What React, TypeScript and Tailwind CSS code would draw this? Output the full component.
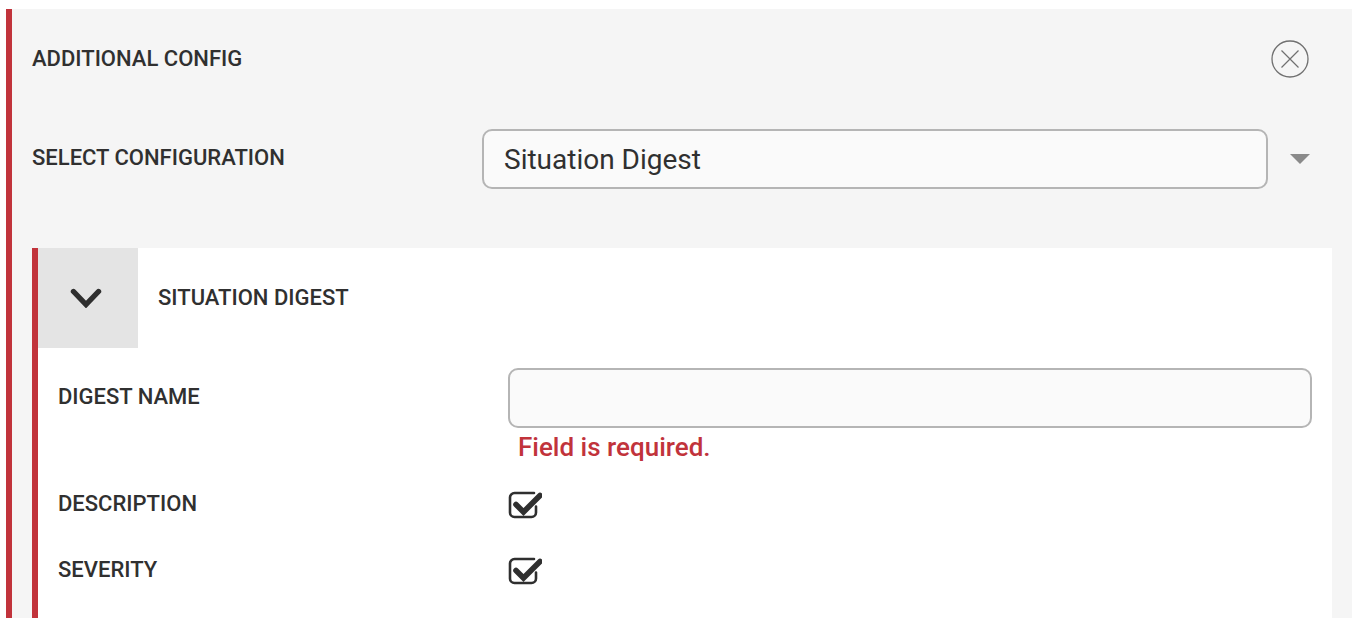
export default function App() {
    return (
        <div className="h-[618px] overflow-hidden bg-white pt-[9px] pl-[6px] pr-[18px] font-['Roboto',sans-serif] text-[#303030]">
            <div className="h-full border-l-[6px] border-[#c1333b] bg-[#f5f5f5] pl-[20px] pr-[20px]">
                {/* Header */}
                <div className="flex items-center justify-between h-[98px] pr-[23.5px] pt-[1px]">
                    <div className="text-[22px] font-medium">ADDITIONAL CONFIG</div>
                    <svg viewBox="0 0 38 38" className="w-[38px] h-[38px] text-[#707070]" fill="none" stroke="currentColor">
                        <circle cx="19" cy="19" r="18" strokeWidth="1.3" />
                        <path d="M10.500 10.500l17 17M27.500 10.500l-17 17" strokeWidth="1.2" />
                    </svg>
                </div>

                {/* Select */}
                <div className="flex items-start h-[141px] pt-[22px]">
                    <div className="w-[450px] h-[56px] flex items-center text-[22px] font-medium">SELECT CONFIGURATION</div>
                    <div className="w-[786px] h-[60px] rounded-[10px] border-2 border-[#b5b5b5] bg-[#fafafa] flex items-center pl-[20px] pt-[1px] text-[28px] leading-none">
                        Situation Digest
                    </div>
                    <div className="ml-[22px] mt-[25px] w-0 h-0 border-l-[10px] border-r-[10px] border-t-[10px] border-l-transparent border-r-transparent border-t-[#8a8a8a]" />
                </div>

                {/* Digest card */}
                <div className="border-l-[6px] border-[#c1333b] bg-white h-[400px]">
                    <div className="flex items-center h-[100px]">
                        <div className="w-[100px] h-[100px] bg-[#e4e4e4] flex items-center justify-center pr-[5px]">
                            <svg viewBox="0 0 32 20" className="w-[32px] h-[20px] text-[#2f2f2f]" fill="none" stroke="currentColor">
                                <path d="M3.500 3.500L16 16.500 28.500 3.500" strokeWidth="5.400" strokeLinecap="round" />
                            </svg>
                        </div>
                        <div className="ml-[20px] mb-[2px] text-[22px] font-medium">SITUATION DIGEST</div>
                    </div>
                    <div className="pl-[20px] pr-[20px] pt-[20px]">
                        <div className="flex items-start">
                            <div className="w-[450px] text-[22px] font-medium leading-[58px] h-[58px]">DIGEST NAME</div>
                            <div className="flex-1">
                                <div className="h-[60px] rounded-[10px] border-2 border-[#b5b5b5] bg-[#fafafa]" />
                                <div className="pl-[10px] text-[#c1333b] text-[26px] font-medium leading-[38px]">Field is required.</div>
                            </div>
                        </div>
                        <div className="flex items-center h-[66px] mt-[4px]">
                            <div className="w-[450px] text-[22px] font-medium">DESCRIPTION</div>
                            <svg viewBox="0 0 34 30" className="w-[34px] h-[30px] mt-[5px] text-[#2f2f2f]" fill="none">
                                <path d="M26 2H6.500a4.500 4.500 0 0 0-4.500 4.500v15a4.500 4.500 0 0 0 4.500 4.500h17a4.500 4.500 0 0 0 4.500-4.500v-6" stroke="currentColor" strokeWidth="2.600" strokeLinecap="round" />
                                <path d="M8 13.500l7.500 7.500L32 4.500" stroke="currentColor" strokeWidth="5.600" strokeLinecap="round" />
                            </svg>
                        </div>
                        <div className="flex items-center h-[66px]">
                            <div className="w-[450px] text-[22px] font-medium">SEVERITY</div>
                            <svg viewBox="0 0 34 30" className="w-[34px] h-[30px] mt-[5px] text-[#2f2f2f]" fill="none">
                                <path d="M26 2H6.500a4.500 4.500 0 0 0-4.500 4.500v15a4.500 4.500 0 0 0 4.500 4.500h17a4.500 4.500 0 0 0 4.500-4.500v-6" stroke="currentColor" strokeWidth="2.600" strokeLinecap="round" />
                                <path d="M8 13.500l7.500 7.500L32 4.500" stroke="currentColor" strokeWidth="5.600" strokeLinecap="round" />
                            </svg>
                        </div>
                    </div>
                </div>
            </div>
        </div>
    );
}
